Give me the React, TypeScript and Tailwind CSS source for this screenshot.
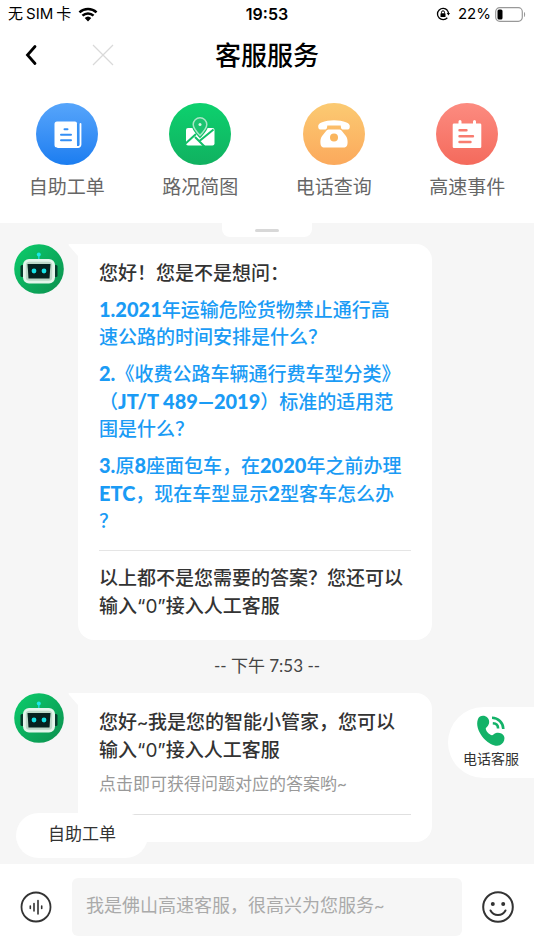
import { ReactNode } from "react";

const questions = [
  ["1.2021年运输危险货物禁止通行高", "速公路的时间安排是什么？"],
  ["2.《收费公路车辆通行费车型分类》", "（JT/T 489—2019）标准的适用范", "围是什么？"],
  ["3.原8座面包车，在2020年之前办理", "ETC，现在车型显示2型客车怎么办", "？"],
];

const TicketIcon = () => (
  <svg viewBox="0 0 62 62" className="size-full" fill="none" aria-hidden="true">
    <path d="M21 18.500h18a2 2 0 0 1 2 2v24H21a2.500 2.500 0 0 1-2.500-2.500V21a2.500 2.500 0 0 1 2.500-2.500Z" fill="#fff" />
    <path d="M44.500 21v20.500a2.500 2.500 0 0 1-2.500 2.500H22" stroke="#fff" strokeWidth="1.800" strokeLinecap="round" />
    <path d="M41.700 21v20.500" stroke="#3391f5" strokeWidth="1.500" />
    <path d="M28.500 26.300h3M25 31.700h10M25 37.200h10" stroke="#348ff5" strokeWidth="2" strokeLinecap="round" />
  </svg>
);

const MapIcon = () => (
  <svg viewBox="0 0 62 62" className="size-full" fill="none" aria-hidden="true">
    <path d="M19 25h24.500a2 2 0 0 1 2 2v13.500a2 2 0 0 1-2 2H19a2 2 0 0 1-2-2V27a2 2 0 0 1 2-2Z" fill="#fff" />
    <path d="m16 41 11-10M44.500 26.500 30.500 38M26 34l9.500 9.500" stroke="#10bf67" strokeWidth="2" />
    <path d="M31 33.500c-4-4.400-7.200-7.800-7.200-11.500a7.200 7.200 0 0 1 14.400 0c0 3.700-3.200 7.100-7.200 11.500Z" fill="#10bf67" stroke="#10bf67" strokeWidth="2.600" />
    <path d="M31 32.500c-4-4.200-6.800-7.400-6.800-11a6.800 6.800 0 0 1 13.600 0c0 3.600-2.800 6.800-6.800 11Z" fill="#1cc370" stroke="#a8e8c6" strokeWidth="1.500" />
    <circle cx="31" cy="21.500" r="1.500" fill="#d8f7e6" />
  </svg>
);

const PhoneIcon = () => (
  <svg viewBox="0 0 62 62" className="size-full" fill="#fff" aria-hidden="true">
    <path d="M15.300 24.500c-.6-2.500.8-4 3.200-5 7.500-3.100 17.500-3.100 25 0 2.400 1 3.800 2.500 3.200 5-.3 1.500-1 2-2.500 2h-3.700c-1.500 0-2.300-.6-2.500-2l-.3-2H24.300l-.3 2c-.2 1.400-1 2-2.500 2h-3.700c-1.500 0-2.200-.5-2.500-2Z" />
    <path d="M26.500 26.500h9c1.500 0 2.500.4 3.400 1.500l4 5c1.200 1.500 1.700 3.500 1.700 6 0 3.800-1.200 5.600-4.200 5.600H21.600c-3 0-4.200-1.800-4.200-5.600 0-2.500.5-4.500 1.700-6l4-5c.9-1.100 1.900-1.500 3.400-1.500Z" />
    <circle cx="31" cy="34.500" r="4" fill="#fab65f" />
  </svg>
);

const EventIcon = () => (
  <svg viewBox="0 0 62 62" className="size-full" fill="none" aria-hidden="true">
    <path d="M18 20.500h4.500v-2a1.500 1.500 0 0 1 3 0v2h11.500v-2a1.500 1.500 0 0 1 3 0v2h4a1.300 1.300 0 0 1 1.300 1.300v22a1.300 1.300 0 0 1-1.300 1.300H18a1.300 1.300 0 0 1-1.300-1.300v-22a1.300 1.300 0 0 1 1.300-1.300Z" fill="#fff" />
    <path d="M23.500 27.300h7M23.500 33.200h13.500M23.500 39h11" stroke="#f87c70" strokeWidth="2.400" strokeLinecap="round" />
  </svg>
);

const shortcuts = [
  { label: "自助工单", icon: <TicketIcon />, bg: "bg-linear-to-b from-[#56a5fb] to-[#1a7df0]" },
  { label: "路况简图", icon: <MapIcon />, bg: "bg-linear-to-b from-[#0dd16e] to-[#10b160]" },
  { label: "电话查询", icon: <PhoneIcon />, bg: "bg-linear-to-b from-[#fbca72] to-[#fba95c]" },
  { label: "高速事件", icon: <EventIcon />, bg: "bg-linear-to-b from-[#fc8b80] to-[#f46a5c]" },
];

const StatusBar = () => (
  <div className="grid h-7 grid-cols-3 items-center pr-2 pl-2 font-['Inter','Noto_Sans_CJK_SC',sans-serif] text-[15px]">
    <div className="flex items-center gap-[3px] whitespace-nowrap">
      <span>无</span>
      <span>SIM</span>
      <span>卡</span>
      <svg viewBox="0 0 20 15" className="ml-1 h-[15px] w-5" aria-hidden="true">
        <path d="M.6 4.500a13.700 13.700 0 0 1 18.800 0l-1.700 1.800a11.200 11.200 0 0 0-15.400 0ZM3.600 7.700a9.400 9.400 0 0 1 12.800 0l-1.700 1.800a6.900 6.900 0 0 0-9.400 0ZM6.700 11a4.900 4.900 0 0 1 6.600 0L10 14.500Z" />
      </svg>
    </div>
    <span className="text-center text-base font-semibold">19:53</span>
    <div className="flex items-center justify-end gap-1">
      <svg viewBox="0 0 14 14" className="mr-1 size-3.5" fill="none" stroke="#000" strokeWidth="1.300" aria-hidden="true">
        <path d="M11.300 3.300A5.600 5.600 0 1 0 11.300 10.700M11.300 3.300A5.600 5.600 0 0 1 12.500 6.500" />
        <path d="m10.700 6 1.800 2.600L14 6Z" fill="#000" stroke="none" />
        <rect x="4.500" y="6.200" width="5" height="3.800" rx=".6" fill="#000" stroke="none" />
        <path d="M5.500 6.500V5.300a1.500 1.500 0 0 1 3 0v1.200" strokeWidth="1" />
      </svg>
      <span>22%</span>
      <svg viewBox="0 0 31 15" className="h-[15px] w-[31px]" fill="none" aria-hidden="true">
        <rect x=".7" y=".7" width="26.600" height="13.600" rx="4" stroke="#999" strokeWidth="1.200" />
        <rect x="2.500" y="2.500" width="5" height="10" rx="1.500" fill="#000" />
        <path d="M29 5c1.500.5 1.500 4.500 0 5Z" fill="#999" />
      </svg>
    </div>
  </div>
);

const Robot = () => (
  <svg viewBox="0 0 50 50" className="size-[50px] shrink-0" role="img" aria-label="智能小管家">
    <defs>
      <linearGradient id="robot" x1="0" y1="0" x2="1" y2="1">
        <stop offset="0" stopColor="#0bce6c" />
        <stop offset="1" stopColor="#0c8f4e" />
      </linearGradient>
    </defs>
    <circle cx="25" cy="25" r="24.800" fill="url(#robot)" />
    <path d="M24.800 10v6" stroke="#24d3cf" strokeWidth="1.500" />
    <circle cx="24.800" cy="10.500" r="2" fill="#1ee8e8" />
    <rect x="6.500" y="21" width="4" height="12" rx="1.500" fill="#073a2b" />
    <rect x="39.500" y="21" width="4" height="12" rx="1.500" fill="#073a2b" />
    <rect x="9" y="15" width="32" height="24.500" rx="6" fill="#e4f5eb" />
    <rect x="11.800" y="17.800" width="26.400" height="19" rx="3.500" fill="#bcd8c8" />
    <path d="M13.500 20h23l-1 14.500h-21Z" fill="#06221f" />
    <circle cx="20" cy="27" r="2.400" fill="#17e3e6" />
    <circle cx="30" cy="27" r="2.400" fill="#17e3e6" />
  </svg>
);

const Message = ({ children }: { children: ReactNode }) => (
  <div className="flex items-start pr-[102px] pl-3.5">
    <Robot />
    <svg viewBox="0 0 14 12" className="h-3 w-3.5 shrink-0" aria-hidden="true">
      <path d="M14 0H5.500C4.300 0 4 .8 5 1.800L14 12Z" fill="#fff" />
    </svg>
    <div className="min-w-0 flex-1 rounded-2xl rounded-tl-none bg-white px-[21px] pt-[15px] text-[19px] leading-7 font-medium text-[#333]">
      {children}
    </div>
  </div>
);

const AgentHint = () => (
  <span className="block h-7">
    输入<span className="font-['Inter',sans-serif] font-normal">“0”</span>接入人工客服
  </span>
);

const App = () => {
  return (
    <div className="flex min-h-screen flex-col bg-[#f6f6f6] font-['Lato','Noto_Sans_CJK_SC',sans-serif] text-black">
      <header className="bg-white pb-[22px]">
        <StatusBar />

        <div className="grid h-[54px] grid-cols-[1fr_auto_1fr] items-center">
          <div className="flex items-center gap-[52px] pl-6">
            <button type="button" aria-label="返回">
              <svg viewBox="0 0 16 22" className="h-[22px] w-4" fill="none" stroke="#000" strokeWidth="2.800" strokeLinecap="round" aria-hidden="true">
                <path d="M11 2.500 3.500 11l7.500 8.500" />
              </svg>
            </button>
            <button type="button" aria-label="关闭">
              <svg viewBox="0 0 22 22" className="size-[22px]" stroke="#d9d9d9" strokeWidth="1.200" aria-hidden="true">
                <path d="m1 1 20 20M21 1 1 21" />
              </svg>
            </button>
          </div>
          <h1 className="text-[26px] leading-8 font-medium">客服服务</h1>
        </div>

        {/* Shortcuts */}
        <nav aria-label="快捷服务" className="grid grid-cols-4 pt-[21px]">
          {shortcuts.map((item) => (
            <a key={item.label} href="#" className="flex flex-col items-center gap-2 text-[19px] leading-7 text-[#666]">
              <span className={`size-[62px] rounded-full ${item.bg}`}>{item.icon}</span>
              {item.label}
            </a>
          ))}
        </nav>
      </header>

      <main className="relative flex-1 pb-[21px]">
        <button
          type="button"
          aria-label="收起"
          className="mx-auto flex h-3.5 w-[90px] items-center justify-center rounded-b-lg bg-white"
        >
          <span className="h-[3px] w-6 rounded-full bg-[#d8d8d8]" />
        </button>

        <div className="mt-[7px]">
          <Message>
            <p>您好！您是不是想问：</p>
            {questions.map((lines) => (
              <a key={lines[0]} href="#" className="mt-2 block text-[#1a9bf5]">
                {lines.map((line) => (
                  <span key={line} className="block h-7 whitespace-nowrap">
                    {line.split(/([A-Z0-9./]+(?: \d+—\d+)?)/).map((part, i) =>
                      i % 2 ? (
                        <b key={i} className="text-xl font-black">
                          {part}
                        </b>
                      ) : (
                        part
                      )
                    )}
                  </span>
                ))}
              </a>
            ))}
            <p className="mt-[15px] border-t border-[#e5e5e5] pt-[13px] pb-5 whitespace-nowrap">
              以上都不是您需要的答案？您还可以
              <AgentHint />
            </p>
          </Message>
        </div>

        <p className="pt-3 pb-[13px] text-center text-[17px] leading-7 text-[#444]">-- 下午 7:53 --</p>

        <Message>
          <p className="whitespace-nowrap">
            您好~我是您的智能小管家，您可以
            <AgentHint />
          </p>
          <p className="mt-1.5 text-[17px] font-normal text-[#999]">点击即可获得问题对应的答案哟~</p>
          <hr className="mt-4 border-[#e0e0e0] pb-[27px]" />
        </Message>

        <button
          type="button"
          className="absolute bottom-1.5 left-4 h-[45px] w-[132px] rounded-full bg-white pb-1 text-[17px] text-[#333]"
        >
          自助工单
        </button>

        <a
          href="#"
          className="absolute right-0 bottom-[86px] flex h-[71px] w-[86px] flex-col items-center rounded-l-full bg-white pt-2 text-sm leading-5 text-[#333]"
        >
          <svg viewBox="0 0 30 32" className="h-8 w-[30px] shrink-0" fill="none" aria-hidden="true">
            <path d="M2 4C3.500 0 9 .2 11.300 2.500c2.300 2.300 2.400 5.500.8 8-1 1.300-2.200 2-2.400 3.200.6 3 3.500 5.800 6.300 6.500 1.200-.1 2.200-1.700 4-2.200 3-.8 6.500.3 7.800 2.700 1.800 3.200-.3 8.200-4 9.600-4.500 1.700-10.500-1.300-15-5.800C4 19.700-.8 11 2 4Z" fill="#13b268" />
            <path d="M16 2.800c6 0 11.300 4.900 11.300 11.200M16.800 8.300c3.200.2 5.300 2.200 5.300 5.200" stroke="#13b268" strokeWidth="2.600" />
          </svg>
          <span className="mt-0.5">电话客服</span>
        </a>
      </main>

      <footer className="flex items-center gap-5 bg-white py-3.5 pr-5 pl-5">
        <button type="button" aria-label="语音输入">
          <svg viewBox="0 0 32 32" className="size-8" fill="none" stroke="#333" strokeWidth="1.800" strokeLinecap="round" aria-hidden="true">
            <circle cx="16" cy="16" r="14.500" />
            <path d="M10.300 15v2.500M14 12.500v7.500M18 9.500v13.500M21.700 15v2.500" strokeWidth="1.600" />
          </svg>
        </button>
        <input
          type="text"
          aria-label="输入消息"
          placeholder="我是佛山高速客服，很高兴为您服务~"
          className="h-[58px] min-w-0 flex-1 rounded-md bg-[#f6f6f6] px-3.5 pb-1 text-lg outline-none placeholder:text-[#aaa]"
        />
        <button type="button" aria-label="表情">
          <svg viewBox="0 0 32 32" className="size-8" fill="none" stroke="#333" strokeWidth="2" strokeLinecap="round" aria-hidden="true">
            <circle cx="16" cy="16" r="14.800" />
            <path d="M8.500 19.500c3.200 6 11.800 6 15 0" />
            <circle cx="10.800" cy="13" r="2" fill="#333" stroke="none" />
            <circle cx="21.200" cy="13" r="2" fill="#333" stroke="none" />
          </svg>
        </button>
      </footer>
    </div>
  );
};

export default App;
